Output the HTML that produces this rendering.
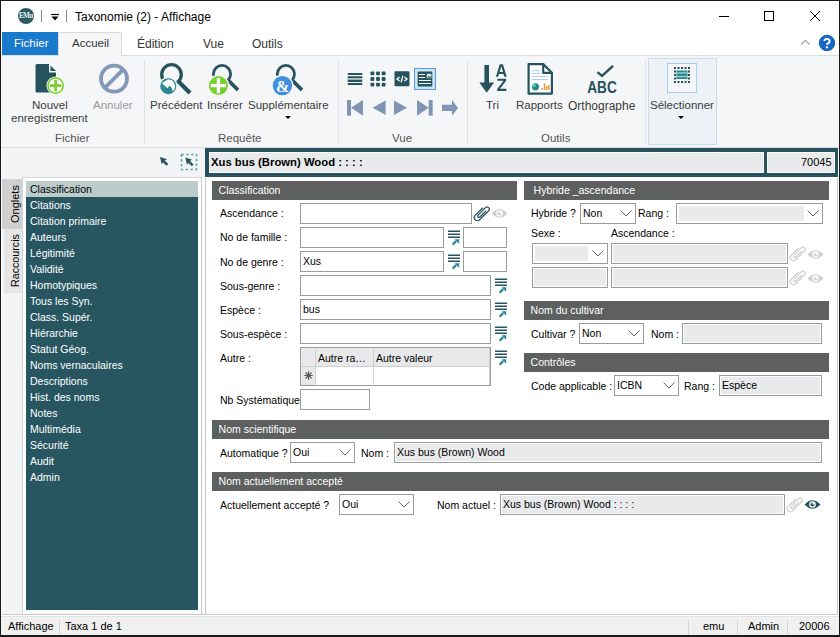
<!DOCTYPE html>
<html><head><meta charset="utf-8">
<style>
*{box-sizing:border-box;margin:0;padding:0}
html,body{width:840px;height:637px;overflow:hidden;background:#fff}
body{position:relative;font-family:"Liberation Sans",sans-serif;color:#000}
.a{position:absolute}
.t{position:absolute;white-space:nowrap;line-height:1}
.rb{font-size:11.5px;color:#3b3b3b}
.grp{font-size:11.5px;color:#555}
.lst{position:absolute;left:26px;width:172px;height:16px;font-size:10.5px;color:#fff;padding-left:4px;line-height:16px;white-space:nowrap}
.hd{position:absolute;background:#5e605f;color:#fff;font-size:10.5px;height:19px;line-height:19px;padding-left:6.6px;white-space:nowrap}
.lb{position:absolute;font-size:10.5px;white-space:nowrap;line-height:12px;color:#000}
.in{position:absolute;border:1px solid #9b9b9b;background:#fff;height:21px;font-size:10.5px;line-height:19px;padding-left:2px;white-space:nowrap}
.dis{background:#e9eaeb;box-shadow:inset 0 0 0 1px #fff}
.cb{position:absolute;border:1px solid #9b9b9b;background:#fff;height:21px;font-size:10.5px;line-height:19px;padding-left:2px;white-space:nowrap}
.sep{position:absolute;width:1px;background:#e1e2e3}
</style></head><body>
<!-- window border -->
<div class="a" style="left:0;top:0;width:840px;height:637px;border:1px solid #1a1a1a;border-width:1px 1px 2px 1px;z-index:50;pointer-events:none"></div>
<div class="a" style="left:1px;top:148px;width:1px;height:468px;background:#fff;z-index:49"></div>

<!-- title bar -->
<div class="a" style="left:18px;top:8px;width:16px;height:16px;border-radius:50%;background:#2b5a62"></div>
<div class="t" style="left:19px;top:12.5px;font-size:7.2px;font-weight:bold;color:#e6eeee;font-family:'Liberation Serif';letter-spacing:-0.7px">EMu</div>
<div class="a" style="left:41px;top:10px;width:1px;height:12px;background:#888"></div>
<svg class="a" style="left:50px;top:13px" width="10" height="10"><path d="M1 1.5h8" stroke="#000" stroke-width="1.2"/><path d="M1.5 3.5h7l-3.5 4z" fill="#000"/></svg>
<div class="a" style="left:66px;top:10px;width:1px;height:12px;background:#888"></div>
<div class="t" style="left:75px;top:11px;font-size:12px;color:#000">Taxonomie (2) - Affichage</div>
<!-- window controls -->
<div class="a" style="left:719px;top:16px;width:10px;height:1px;background:#000"></div>
<div class="a" style="left:764px;top:11px;width:10px;height:10px;border:1px solid #000"></div>
<svg class="a" style="left:809px;top:10px" width="12" height="12"><path d="M1 1L11 11M11 1L1 11" stroke="#000" stroke-width="1"/></svg>

<!-- tab strip -->
<div class="a" style="left:1px;top:55px;width:838px;height:1px;background:#dadbdc"></div>
<div class="a" style="left:2px;top:32px;width:56px;height:23px;background:#1979ca"></div>
<div class="t" style="left:14px;top:38px;font-size:11.5px;color:#fff">Fichier</div>
<div class="a" style="left:58px;top:32px;width:64px;height:24px;background:#f5f6f7;border:1px solid #dadbdc;border-bottom:none"></div>
<div class="t" style="left:72px;top:38px;font-size:11.5px;color:#333">Accueil</div>
<div class="t" style="left:137px;top:38px;font-size:12px;color:#333">Édition</div>
<div class="t" style="left:203px;top:38px;font-size:12px;color:#333">Vue</div>
<div class="t" style="left:252px;top:38px;font-size:12px;color:#333">Outils</div>
<svg class="a" style="left:800px;top:39px" width="11" height="8"><path d="M1 5.5L5.25 1.3L9.5 5.5" stroke="#a0a0a0" stroke-width="1.1" fill="none"/></svg>
<svg class="a" style="left:818px;top:34px" width="18" height="18"><circle cx="9" cy="9" r="7.7" fill="#1767c6" stroke="#0f539f" stroke-width="0.9"/><path d="M6.4 7.1a2.6 2.4 0 1 1 3.9 2.1c-.9.5-1.3.9-1.3 1.9" fill="none" stroke="#fff" stroke-width="2"/><rect x="8" y="12.3" width="2" height="2" fill="#fff"/></svg>

<!-- ribbon -->
<div class="a" style="left:1px;top:56px;width:838px;height:91px;background:#f5f6f7"></div>
<div class="a" style="left:1px;top:147px;width:838px;height:1px;background:#dadbdc"></div>
<div class="sep" style="left:144px;top:60px;height:84px"></div>
<div class="sep" style="left:338px;top:60px;height:84px"></div>
<div class="sep" style="left:467px;top:60px;height:84px"></div>
<div class="sep" style="left:645px;top:60px;height:84px"></div>

<div class="t rb" style="left:32px;top:100px">Nouvel</div>
<div class="t rb" style="left:11px;top:113px">enregistrement</div>
<div class="t rb" style="left:93px;top:100px;color:#999">Annuler</div>
<div class="t grp" style="left:55px;top:133px">Fichier</div>
<div class="t rb" style="left:150px;top:100px">Précédent</div>
<div class="t rb" style="left:207px;top:100px">Insérer</div>
<div class="t rb" style="left:248px;top:100px">Supplémentaire</div>
<div class="a" style="left:285px;top:116px;border-left:3px solid transparent;border-right:3px solid transparent;border-top:3px solid #000"></div>
<div class="t grp" style="left:218px;top:133px">Requête</div>
<div class="t grp" style="left:392px;top:133px">Vue</div>
<div class="t rb" style="left:486px;top:100px">Tri</div>
<div class="t rb" style="left:516px;top:100px">Rapports</div>
<div class="t rb" style="left:568px;top:100px;font-size:12px">Orthographe</div>
<div class="t grp" style="left:541px;top:133px">Outils</div>
<div class="a" style="left:648px;top:58px;width:69px;height:87px;background:#eef2f7;border:1px solid #c5dcf2"></div>
<div class="a" style="left:667px;top:63px;width:30px;height:30px;background:#f4f6f9;border:1px solid #a8cdf0"></div>
<div class="t rb" style="left:650px;top:100px">Sélectionner</div>
<div class="a" style="left:678px;top:116px;border-left:3px solid transparent;border-right:3px solid transparent;border-top:3px solid #000"></div>

<!-- ribbon icons -->
<svg class="a" style="left:0;top:0;pointer-events:none" width="840" height="148">
 <!-- Nouvel enregistrement -->
 <path d="M35.5 64h13.5v8.5h7v18.5a1.5 1.5 0 0 1-1.5 1.5h-17.5a1.5 1.5 0 0 1-1.5-1.5v-25.5a1.5 1.5 0 0 1 1.5-1.5z" fill="#26535e"/>
 <path d="M50.5 65.5v5.5h5.5z" fill="#26535e"/>
 <circle cx="55.6" cy="85.6" r="9.2" fill="#f5f6f7"/>
 <circle cx="55.6" cy="85.6" r="7.6" fill="#fff" stroke="#7ad02b" stroke-width="1.6"/>
 <path d="M49.8 85.6h11.6M55.6 79.8v11.6" stroke="#7ad02b" stroke-width="2.6"/>
 <!-- Annuler -->
 <circle cx="114" cy="78.7" r="13" fill="none" stroke="#8497b7" stroke-width="3.8"/>
 <path d="M104.5 88.2L123.5 69.2" stroke="#8497b7" stroke-width="3.8"/>
 <!-- Précédent -->
 <circle cx="171.5" cy="74.5" r="9.8" fill="none" stroke="#26535e" stroke-width="3.3"/>
 <path d="M178.5 81.5L190 93" stroke="#26535e" stroke-width="4.2"/>
 <circle cx="168.3" cy="86.2" r="9.4" fill="#f5f6f7"/>
 <circle cx="168.3" cy="86.2" r="8" fill="#2a8a90"/>
 <path d="M161.8 83.3L167.7 79.6A6.6 6.6 0 0 1 172.1 91.6A4.6 4.6 0 0 0 169.3 85.8L167.5 88.2Z" fill="#fff"/>
 <!-- Insérer -->
 <circle cx="222" cy="74" r="8.6" fill="none" stroke="#26535e" stroke-width="2.8"/>
 <path d="M228 80L238 90" stroke="#26535e" stroke-width="3.8"/>
 <circle cx="218.4" cy="85.6" r="10.8" fill="#f5f6f7"/>
 <circle cx="218.4" cy="85.6" r="9.5" fill="#7ad02b"/>
 <path d="M210.8 85.6h15.2M218.4 78v15.2" stroke="#fff" stroke-width="3.2"/>
 <!-- Supplémentaire -->
 <circle cx="285.9" cy="74" r="8.6" fill="none" stroke="#26535e" stroke-width="2.8"/>
 <path d="M292 80L302 90" stroke="#26535e" stroke-width="3.8"/>
 <circle cx="282.4" cy="85.6" r="11" fill="#f5f6f7"/>
 <circle cx="282.4" cy="85.6" r="9.7" fill="#3f8fe0"/>
 <text x="282.6" y="91.5" font-family="Liberation Serif" font-weight="bold" font-size="16" fill="#fff" text-anchor="middle">&amp;</text>
 <!-- Vue row 1 -->
 <g fill="#26535e">
  <rect x="347.5" y="73" width="15" height="2" rx="1"/>
  <rect x="347.5" y="76.2" width="15" height="2" rx="1"/>
  <rect x="347.5" y="78.4" width="15" height="1.6" fill="#9fb1b5"/>
  <rect x="347.5" y="80" width="15" height="2" rx="1"/>
  <rect x="347.5" y="83" width="15" height="2" rx="1"/>
  <rect x="370.5" y="71.5" width="3.8" height="3.8" rx=".8"/><rect x="376.1" y="71.5" width="3.8" height="3.8" rx=".8"/><rect x="381.7" y="71.5" width="3.8" height="3.8" rx=".8"/>
  <rect x="370.5" y="77.1" width="3.8" height="3.8" rx=".8"/><rect x="376.1" y="77.1" width="3.8" height="3.8" rx=".8"/><rect x="381.7" y="77.1" width="3.8" height="3.8" rx=".8"/>
  <rect x="370.5" y="82.7" width="3.8" height="3.8" rx=".8"/><rect x="376.1" y="82.7" width="3.8" height="3.8" rx=".8"/><rect x="381.7" y="82.7" width="3.8" height="3.8" rx=".8"/>
  <rect x="394.5" y="71.3" width="15" height="15" rx="1.2"/>
 </g>
 <path d="M399.6 77l-2.6 2 2.6 2M404.4 77l2.6 2-2.6 2M402.9 75.8l-1.8 6.4" stroke="#fff" stroke-width="1.3" fill="none"/>
 <rect x="414.5" y="68.5" width="21" height="21" fill="#cce4f7" stroke="#5a9be6" stroke-width="1"/>
 <rect x="417.7" y="71.5" width="14.6" height="15" rx="1" fill="#26535e"/>
 <path d="M419 74.5h6M419 77.5h6M419 80.5h12M419 83.5h12" stroke="#fff" stroke-width="1"/>
 <rect x="426.8" y="73.8" width="4.6" height="4.4" fill="#dfe7ea"/>
 <path d="M427.3 77.8l1.6-1.8 1 1 .9-.9v1.7z" fill="#26535e"/>
 <!-- nav arrows -->
 <g fill="#8294b4">
  <rect x="347" y="100" width="4" height="15.7"/>
  <path d="M351 107.85L363 100v15.7z"/>
  <path d="M372.7 107.75L385.6 100.5v14.5z"/>
  <path d="M407 107.75L394 100.5v14.5z"/>
  <path d="M428.7 107.85L417 100v15.7z"/>
  <rect x="428.7" y="100" width="4" height="15.7"/>
  <path d="M442 104.7h10v-4.7l6 7.9-6 7.9v-4.8h-10z"/>
 </g>
 <!-- Tri -->
 <g fill="#26535e">
  <rect x="484.4" y="65" width="4.6" height="18"/>
  <path d="M479.3 82.5h14.8l-7.4 10.3z"/>
 </g>
 <path d="M495.9 76.8L499.7 64.3h3.2l3.8 12.5h-2.4l-.8-2.7h-4.6l-.8 2.7zM499.6 72.1h3.4l-1.7-5.8z" fill="#26535e" fill-rule="evenodd"/>
 <path d="M497.3 78.7h8.9v2l-6.3 8.1h6.4v2.1h-9.1v-2l6.3-8.1h-6.2z" fill="#26535e"/>
 <!-- Rapports -->
 <path d="M528.6 64.1h14.6l8.7 8.7v20.8h-23.3z" fill="#fff" stroke="#26535e" stroke-width="2.2" stroke-linejoin="round"/>
 <path d="M543.2 64.1v8.7h8.7" fill="none" stroke="#26535e" stroke-width="2.2" stroke-linejoin="round"/>
 <path d="M532 70.5h8M532 73.5h8M532 76.5h16M532 79.5h16" stroke="#a9d0f0" stroke-width="1"/>
 <circle cx="535.5" cy="86.8" r="3.6" fill="#2a8a8f"/>
 <path d="M535.5 86.8v-3.6a3.6 3.6 0 0 0-3.6 3.6z" fill="#4fd4b0"/>
 <path d="M541.5 90h1.4v-2h-1.4zM543.8 90h1.4v-6.5h-1.4zM546 90h1.4v-4h-1.4zM548.2 90h1.4v-5h-1.4z" fill="#e8962e"/>
 <!-- Orthographe -->
 <path d="M597.4 72.1L602 75.9L613 65.8" fill="none" stroke="#26535e" stroke-width="2.4"/>
 <text x="602" y="92.8" font-family="Liberation Sans" font-weight="bold" font-size="15.6" fill="#26535e" text-anchor="middle" textLength="29.5" lengthAdjust="spacingAndGlyphs">ABC</text>
 <!-- Selectionner -->
 <g fill="#26535e">
  <rect x="674" y="67" width="2" height="2"/><rect x="677.5" y="67" width="2" height="2"/><rect x="681" y="67" width="2" height="2"/><rect x="684.5" y="67" width="2" height="2"/><rect x="688" y="67" width="2" height="2"/>
  <rect x="674" y="81" width="2" height="2"/><rect x="677.5" y="81" width="2" height="2"/><rect x="681" y="81" width="2" height="2"/><rect x="684.5" y="81" width="2" height="2"/><rect x="688" y="81" width="2" height="2"/>
  <rect x="674" y="70.5" width="2" height="2"/><rect x="674" y="74" width="2" height="2"/><rect x="674" y="77.5" width="2" height="2"/>
  <rect x="688" y="70.5" width="2" height="2"/><rect x="688" y="74" width="2" height="2"/><rect x="688" y="77.5" width="2" height="2"/>
 </g>
 <rect x="676.5" y="70.5" width="11" height="8.5" fill="#2a8a8f"/>
 <rect x="676.5" y="72.3" width="11" height="1.3" fill="#9fd0d2"/>
 <rect x="676.5" y="75.9" width="11" height="1.3" fill="#9fd0d2"/>
</svg>

<!-- left panel -->
<div class="a" style="left:1px;top:148px;width:204px;height:467px;background:#f3f4f6"></div>
<svg class="a" style="left:0;top:148px" width="205" height="30"><g transform="translate(0,-148)"> <!-- left panel arrows -->
 <path d="M160 157l7 2.2-2.3 1.2 3.6 3.6-1.8 1.8-3.6-3.6-1.2 2.3z" fill="#26535e"/>
 <rect x="181.5" y="154.5" width="15" height="15" fill="none" stroke="#5fa8ab" stroke-width="1.6" stroke-dasharray="2.6 2.2"/>
 <path d="M185.3 157.5l7 2.2-2.3 1.2 3.6 3.6-1.8 1.8-3.6-3.6-1.2 2.3z" fill="#26535e"/>
</g></svg>
<div class="a" style="left:4px;top:229px;width:18px;height:64px;background:#e6e6e6"></div>
<div class="a" style="left:2px;top:179px;width:20px;height:50px;background:#d0d0d0"></div>
<div class="t" style="left:10px;top:223px;font-size:11px;transform:rotate(-90deg);transform-origin:0 0">Onglets</div>
<div class="t" style="left:10px;top:287px;font-size:10.7px;transform:rotate(-90deg);transform-origin:0 0">Raccourcis</div>
<div class="a" style="left:22px;top:177px;width:180px;height:437px;background:#fff;border:1px solid #d5d5d5;border-right:none;border-bottom:none"></div>
<div class="a" style="left:26px;top:181px;width:172px;height:429px;background:#275661"></div>
<div class="lst" style="top:181px;background:#bdcccb;color:#000">Classification</div>
<div class="lst" style="top:197px">Citations</div>
<div class="lst" style="top:213px">Citation primaire</div>
<div class="lst" style="top:229px">Auteurs</div>
<div class="lst" style="top:245px">Légitimité</div>
<div class="lst" style="top:261px">Validité</div>
<div class="lst" style="top:277px">Homotypiques</div>
<div class="lst" style="top:293px">Tous les Syn.</div>
<div class="lst" style="top:309px">Class. Supér.</div>
<div class="lst" style="top:325px">Hiérarchie</div>
<div class="lst" style="top:341px">Statut Géog.</div>
<div class="lst" style="top:357px">Noms vernaculaires</div>
<div class="lst" style="top:373px">Descriptions</div>
<div class="lst" style="top:389px">Hist. des noms</div>
<div class="lst" style="top:405px">Notes</div>
<div class="lst" style="top:421px">Multimédia</div>
<div class="lst" style="top:437px">Sécurité</div>
<div class="lst" style="top:453px">Audit</div>
<div class="lst" style="top:469px">Admin</div>
<div class="a" style="left:201px;top:177px;width:1px;height:437px;background:#c8c8c8"></div>
<div class="a" style="left:202px;top:177px;width:3px;height:437px;background:#fff"></div>

<!-- main panel -->
<div class="a" style="left:205px;top:148px;width:634px;height:467px;background:#fff"></div>
<div class="a" style="left:205px;top:178px;width:1px;height:437px;background:#c8c8c8"></div>
<div class="a" style="left:2px;top:614px;width:836px;height:1px;background:#c8c8c8"></div>
<div class="a" style="left:2px;top:615px;width:836px;height:1px;background:#fff"></div>
<div class="a" style="left:837px;top:178px;width:1px;height:437px;background:#c8c8c8"></div>
<div class="a" style="left:205px;top:148px;width:633px;height:29px;background:#26535e"></div>
<div class="a" style="left:209px;top:152px;width:555px;height:21px;background:#e9eaeb;border:1px solid #fff"></div>
<div class="a" style="left:767px;top:152px;width:68px;height:21px;background:#e9eaeb;border:1px solid #fff"></div>
<div class="t" style="left:211px;top:157px;font-size:11.3px;font-weight:bold">Xus bus (Brown) Wood : : : :</div>
<div class="t" style="left:801px;top:157px;font-size:11px">70045</div>

<!-- Classification -->
<div class="hd" style="left:212px;top:181px;width:305px">Classification</div>
<div class="lb" style="left:220px;top:207px">Ascendance :</div>
<div class="lb" style="left:220px;top:231px">No de famille :</div>
<div class="lb" style="left:220px;top:256px">No de genre :</div>
<div class="lb" style="left:220px;top:280px">Sous-genre :</div>
<div class="lb" style="left:220px;top:304px">Espèce :</div>
<div class="lb" style="left:220px;top:328px">Sous-espèce :</div>
<div class="lb" style="left:220px;top:352px">Autre :</div>
<div class="lb" style="left:220px;top:394px">Nb Systématique</div>
<div class="in" style="left:300px;top:203px;width:172px"></div>
<div class="in" style="left:300px;top:227px;width:144px"></div>
<div class="in" style="left:463px;top:227px;width:44px"></div>
<div class="in" style="left:300px;top:251px;width:144px">Xus</div>
<div class="in" style="left:463px;top:251px;width:44px"></div>
<div class="in" style="left:300px;top:275px;width:191px"></div>
<div class="in" style="left:300px;top:299px;width:191px">bus</div>
<div class="in" style="left:300px;top:323px;width:191px"></div>
<div class="in" style="left:300px;top:347px;width:191px;height:39px;padding:0">
  <div class="a" style="left:0;top:0;width:188px;height:18px;background:#e8e9ea"></div>
  <div class="a" style="left:0;top:18px;width:14px;height:19px;background:#e8e9ea"></div>
  <div class="a" style="left:0;top:18px;width:188px;height:1px;background:#cfcfcf"></div>
  <div class="a" style="left:14px;top:1px;width:1px;height:35px;background:#cfcfcf"></div>
  <div class="a" style="left:72px;top:1px;width:1px;height:35px;background:#cfcfcf"></div>
  <div class="a" style="left:188px;top:0;width:1px;height:37px;background:#cfcfcf"></div>
  <div class="t" style="left:17px;top:5px;font-size:10.5px">Autre ra…</div>
  <div class="t" style="left:75px;top:5px;font-size:10.5px">Autre valeur</div>
  <svg class="a" style="left:2px;top:22px" width="11" height="11"><path d="M5.5 1.2v8.6M1.2 5.5h8.6M2.5 2.5l6 6M8.5 2.5l-6 6" stroke="#555" stroke-width="1.1"/></svg>
</div>
<div class="in" style="left:300px;top:389px;width:70px"></div>

<!-- Hybride -->
<div class="hd" style="left:524px;top:181px;width:305px;padding-left:9.6px">Hybride _ascendance</div>
<div class="lb" style="left:531px;top:207px">Hybride ?</div>
<div class="cb" style="left:580px;top:203px;width:56px">Non<svg class="a" style="right:3px;top:6px" width="12" height="7"><path d="M0.5 0.5L6 6L11.5 0.5" stroke="#666" stroke-width="1" fill="none"/></svg></div>
<div class="lb" style="left:638px;top:207px">Rang :</div>
<div class="cb" style="left:676px;top:203px;width:147px"><div class="a" style="left:2px;top:2px;width:125px;height:15px;background:#e9eaeb"></div><svg class="a" style="right:3px;top:6px" width="12" height="7"><path d="M0.5 0.5L6 6L11.5 0.5" stroke="#666" stroke-width="1" fill="none"/></svg></div>
<div class="lb" style="left:531px;top:227px">Sexe :</div>
<div class="lb" style="left:611px;top:227px">Ascendance :</div>
<div class="cb" style="left:532px;top:243px;width:76px"><div class="a" style="left:2px;top:2px;width:53px;height:15px;background:#e9eaeb"></div><svg class="a" style="right:3px;top:6px" width="12" height="7"><path d="M0.5 0.5L6 6L11.5 0.5" stroke="#666" stroke-width="1" fill="none"/></svg></div>
<div class="in dis" style="left:611px;top:243px;width:177px"></div>
<div class="in dis" style="left:532px;top:267px;width:76px"></div>
<div class="in dis" style="left:611px;top:267px;width:177px"></div>

<!-- Nom du cultivar -->
<div class="hd" style="left:524px;top:301px;width:305px">Nom du cultivar</div>
<div class="lb" style="left:531px;top:328px">Cultivar ?</div>
<div class="cb" style="left:579px;top:323px;width:65px">Non<svg class="a" style="right:3px;top:6px" width="12" height="7"><path d="M0.5 0.5L6 6L11.5 0.5" stroke="#666" stroke-width="1" fill="none"/></svg></div>
<div class="lb" style="left:651px;top:328px">Nom :</div>
<div class="in dis" style="left:682px;top:323px;width:140px"></div>

<!-- Contrôles -->
<div class="hd" style="left:524px;top:353px;width:305px">Contrôles</div>
<div class="lb" style="left:531px;top:380px">Code applicable :</div>
<div class="cb" style="left:614px;top:375px;width:65px">ICBN<svg class="a" style="right:3px;top:6px" width="12" height="7"><path d="M0.5 0.5L6 6L11.5 0.5" stroke="#666" stroke-width="1" fill="none"/></svg></div>
<div class="lb" style="left:684px;top:380px">Rang :</div>
<div class="in dis" style="left:719px;top:375px;width:103px">Espèce</div>

<!-- Nom scientifique -->
<div class="hd" style="left:212px;top:420px;width:617px">Nom scientifique</div>
<div class="lb" style="left:220px;top:447px">Automatique ?</div>
<div class="cb" style="left:290px;top:442px;width:65px">Oui<svg class="a" style="right:3px;top:6px" width="12" height="7"><path d="M0.5 0.5L6 6L11.5 0.5" stroke="#666" stroke-width="1" fill="none"/></svg></div>
<div class="lb" style="left:361px;top:447px">Nom :</div>
<div class="in dis" style="left:394px;top:442px;width:428px">Xus bus (Brown) Wood</div>

<!-- Nom actuellement accepté -->
<div class="hd" style="left:212px;top:472px;width:617px">Nom actuellement accepté</div>
<div class="lb" style="left:220px;top:499px">Actuellement accepté ?</div>
<div class="cb" style="left:339px;top:494px;width:75px">Oui<svg class="a" style="right:3px;top:6px" width="12" height="7"><path d="M0.5 0.5L6 6L11.5 0.5" stroke="#666" stroke-width="1" fill="none"/></svg></div>
<div class="lb" style="left:437px;top:499px">Nom actuel :</div>
<div class="in dis" style="left:500px;top:494px;width:285px">Xus bus (Brown) Wood : : : :</div>


<!-- form icons -->
<svg class="a" style="left:473px;top:205px" width="17" height="17"><g transform="translate(8.5,8.5) rotate(45) translate(-4,-11)"><path d="M0.9 6V16.8A3.1 3.1 0 0 0 7.1 16.8V4A2.2 2.2 0 0 0 2.7 4V14.6A1.3 1.3 0 0 0 5.3 14.6V6" fill="none" stroke="#26535e" stroke-width="1.3"/></g></svg>
<svg class="a" style="left:491px;top:208px" width="17" height="11"><path d="M0.5 5.5Q8.5 -3 16.5 5.5Q8.5 14 0.5 5.5z" fill="#cfcfcf"/><circle cx="8.5" cy="5.5" r="3.3" fill="#fff"/><circle cx="8.5" cy="5.5" r="2" fill="#cfcfcf"/><path d="M8.5 5.5V3.5A2 2 0 0 1 10.5 5.5z" fill="#fff"/></svg>
<svg class="a" style="left:448px;top:230px" width="14" height="16"><path d="M0 1.2h12M0 4.2h12M0 7.2h12" stroke="#26535e" stroke-width="1.5"/><path d="M4.6 14.6l3.6-3.4" stroke="#2a8a8f" stroke-width="2.3"/><path d="M6.6 9.2h4.6v4.6z" fill="#2a8a8f"/></svg>
<svg class="a" style="left:448px;top:254px" width="14" height="16"><path d="M0 1.2h12M0 4.2h12M0 7.2h12" stroke="#26535e" stroke-width="1.5"/><path d="M4.6 14.6l3.6-3.4" stroke="#2a8a8f" stroke-width="2.3"/><path d="M6.6 9.2h4.6v4.6z" fill="#2a8a8f"/></svg>
<svg class="a" style="left:495px;top:278px" width="14" height="16"><path d="M0 1.2h12M0 4.2h12M0 7.2h12" stroke="#26535e" stroke-width="1.5"/><path d="M4.6 14.6l3.6-3.4" stroke="#2a8a8f" stroke-width="2.3"/><path d="M6.6 9.2h4.6v4.6z" fill="#2a8a8f"/></svg>
<svg class="a" style="left:495px;top:302px" width="14" height="16"><path d="M0 1.2h12M0 4.2h12M0 7.2h12" stroke="#26535e" stroke-width="1.5"/><path d="M4.6 14.6l3.6-3.4" stroke="#2a8a8f" stroke-width="2.3"/><path d="M6.6 9.2h4.6v4.6z" fill="#2a8a8f"/></svg>
<svg class="a" style="left:495px;top:326px" width="14" height="16"><path d="M0 1.2h12M0 4.2h12M0 7.2h12" stroke="#26535e" stroke-width="1.5"/><path d="M4.6 14.6l3.6-3.4" stroke="#2a8a8f" stroke-width="2.3"/><path d="M6.6 9.2h4.6v4.6z" fill="#2a8a8f"/></svg>
<svg class="a" style="left:495px;top:350px" width="14" height="16"><path d="M0 1.2h12M0 4.2h12M0 7.2h12" stroke="#26535e" stroke-width="1.5"/><path d="M4.6 14.6l3.6-3.4" stroke="#2a8a8f" stroke-width="2.3"/><path d="M6.6 9.2h4.6v4.6z" fill="#2a8a8f"/></svg>
<svg class="a" style="left:789px;top:245px" width="17" height="17"><g transform="translate(8.5,8.5) rotate(45) translate(-4,-11)"><path d="M0.9 6V16.8A3.1 3.1 0 0 0 7.1 16.8V4A2.2 2.2 0 0 0 2.7 4V14.6A1.3 1.3 0 0 0 5.3 14.6V6" fill="none" stroke="#d0d0d0" stroke-width="1.3"/></g></svg>
<svg class="a" style="left:807px;top:249px" width="17" height="11"><path d="M0.5 5.5Q8.5 -3 16.5 5.5Q8.5 14 0.5 5.5z" fill="#d0d0d0"/><circle cx="8.5" cy="5.5" r="3.3" fill="#fff"/><circle cx="8.5" cy="5.5" r="2" fill="#d0d0d0"/><path d="M8.5 5.5V3.5A2 2 0 0 1 10.5 5.5z" fill="#fff"/></svg>
<svg class="a" style="left:789px;top:269px" width="17" height="17"><g transform="translate(8.5,8.5) rotate(45) translate(-4,-11)"><path d="M0.9 6V16.8A3.1 3.1 0 0 0 7.1 16.8V4A2.2 2.2 0 0 0 2.7 4V14.6A1.3 1.3 0 0 0 5.3 14.6V6" fill="none" stroke="#d0d0d0" stroke-width="1.3"/></g></svg>
<svg class="a" style="left:807px;top:273px" width="17" height="11"><path d="M0.5 5.5Q8.5 -3 16.5 5.5Q8.5 14 0.5 5.5z" fill="#d0d0d0"/><circle cx="8.5" cy="5.5" r="3.3" fill="#fff"/><circle cx="8.5" cy="5.5" r="2" fill="#d0d0d0"/><path d="M8.5 5.5V3.5A2 2 0 0 1 10.5 5.5z" fill="#fff"/></svg>
<svg class="a" style="left:786px;top:496px" width="17" height="17"><g transform="translate(8.5,8.5) rotate(45) translate(-4,-11)"><path d="M0.9 6V16.8A3.1 3.1 0 0 0 7.1 16.8V4A2.2 2.2 0 0 0 2.7 4V14.6A1.3 1.3 0 0 0 5.3 14.6V6" fill="none" stroke="#d0d0d0" stroke-width="1.3"/></g></svg>
<svg class="a" style="left:804px;top:499px" width="17" height="11"><path d="M0.5 5.5Q8.5 -3 16.5 5.5Q8.5 14 0.5 5.5z" fill="#26535e"/><circle cx="8.5" cy="5.5" r="3.3" fill="#fff"/><circle cx="8.5" cy="5.5" r="2" fill="#26535e"/><path d="M8.5 5.5V3.5A2 2 0 0 1 10.5 5.5z" fill="#fff"/></svg>
<!-- status bar -->
<div class="a" style="left:1px;top:616px;width:838px;height:1px;background:#e3e3e3"></div>
<div class="a" style="left:1px;top:617px;width:838px;height:18px;background:#f0f0f0"></div>
<div class="t" style="left:8px;top:621px;font-size:11px">Affichage</div>
<div class="a" style="left:59px;top:620px;width:1px;height:15px;background:#d5d5d5"></div>
<div class="t" style="left:65px;top:621px;font-size:11px">Taxa 1 de 1</div>
<div class="a" style="left:688px;top:620px;width:1px;height:15px;background:#d5d5d5"></div>
<div class="t" style="left:703px;top:621px;font-size:11px">emu</div>
<div class="a" style="left:737px;top:620px;width:1px;height:15px;background:#d5d5d5"></div>
<div class="t" style="left:748px;top:621px;font-size:11px">Admin</div>
<div class="a" style="left:787px;top:620px;width:1px;height:15px;background:#d5d5d5"></div>
<div class="t" style="left:799px;top:621px;font-size:11px">20006</div>
</body></html>
